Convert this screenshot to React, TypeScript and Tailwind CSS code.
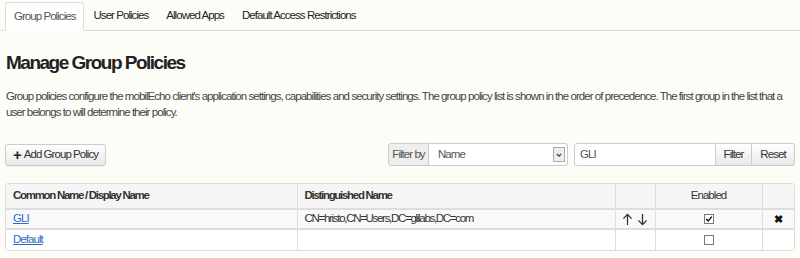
import React from "react";

const FONT = { fontFamily: "'Liberation Sans', Arial, sans-serif" };

const TABS = ["Group Policies", "User Policies", "Allowed Apps", "Default Access Restrictions"];

function CheckBox({ checked }: { checked: boolean }) {
  return (
    <span className="inline-flex h-[10px] w-[10px] items-center justify-center border border-[#777] bg-white align-middle">
      {checked && (
        <svg viewBox="0 0 10 10" className="h-[8px] w-[8px]">
          <path d="M1.5 5 L4 7.5 L8.5 2" fill="none" stroke="#111" strokeWidth="1.8" />
        </svg>
      )}
    </span>
  );
}

function Arrow({ down }: { down?: boolean }) {
  return (
    <svg viewBox="0 0 12 14" className="h-[13px] w-[11px]">
      <g transform={down ? "rotate(180 6 7)" : undefined} fill="none" stroke="#333" strokeWidth="1.4">
        <path d="M6 13 V1.5" />
        <path d="M1.5 6 L6 1.5 L10.5 6" />
      </g>
    </svg>
  );
}

export default function App() {
  return (
    <div className="h-[258px] w-[800px] overflow-hidden bg-[#fdfdf8] text-[11.5px] tracking-[-0.95px] text-[#333]" style={FONT}>
      <div className="flex border-b border-[#ddd] px-[5px] pt-[2px]">
        {TABS.map((t, i) => (
          <div
            key={t}
            className={
              i === 0
                ? "-mb-px flex h-[29px] items-center rounded-t-[3px] border border-[#ddd] border-b-transparent bg-white px-[8px] text-[#555]"
                : "flex h-[28px] items-center px-[9px] text-[#222]"
            }
          >
            {t}
          </div>
        ))}
      </div>

      <div className="px-[5px]">
        <h1 className="ml-px mt-[21px] text-[19px] font-bold leading-[22px] tracking-[-1.5px] text-[#222]">Manage Group Policies</h1>
        <p className="ml-px mt-[14px] leading-[16px] text-[#444]">
          Group policies configure the mobilEcho client's application settings, capabilities and security settings. The group policy list is shown in the order of precedence. The first group in the list that a user belongs to will determine their policy.
        </p>

        <div className="mt-[23px] flex items-center">
          <button className="flex h-[22px] items-center gap-[2px] rounded-[3px] border border-[#ccc] bg-gradient-to-b from-white to-[#e8e8e8] px-[7px] text-[#333] shadow-[0_1px_1px_rgba(0,0,0,0.05)]">
            <span className="text-[15px] font-bold leading-none tracking-normal text-[#222]">+</span>
            Add Group Policy
          </button>

          <div className="ml-auto flex h-[23px] items-stretch whitespace-nowrap">
            <div className="flex w-[41px] items-center justify-center rounded-l-[3px] border border-[#ccc] bg-[#eee] text-[#555]">Filter by</div>
            <div className="flex w-[139px] items-center justify-between rounded-r-[3px] border border-l-0 border-[#ccc] bg-white pl-[9px] pr-[2px] text-[#555]">
              <span>Name</span>
              <span className="flex h-[15px] w-[12px] items-center justify-center border border-[#aaa] bg-[#eee]">
                <svg viewBox="0 0 8 8" className="h-[6px] w-[6px]">
                  <path d="M1 2.5 L4 5.5 L7 2.5" fill="none" stroke="#333" strokeWidth="1.6" />
                </svg>
              </span>
            </div>
            <div className="ml-[6px] flex w-[142px] items-center rounded-l-[3px] border border-[#ccc] bg-white pl-[5px] text-[#555]">GLI</div>
            <div className="flex w-[36px] items-center justify-center border border-l-0 border-[#ccc] bg-gradient-to-b from-white to-[#e8e8e8] text-[#333]">Filter</div>
            <div className="flex w-[43px] items-center justify-center rounded-r-[3px] border border-l-0 border-[#ccc] bg-gradient-to-b from-white to-[#e8e8e8] text-[#333]">Reset</div>
          </div>
        </div>
      </div>

      <div className="mx-[5px] mt-[17px] overflow-hidden rounded-[3px] border border-[#ddd] bg-white">
        <table className="w-full table-fixed border-collapse">
          <colgroup>
            <col className="w-[291px]" />
            <col className="w-[318px]" />
            <col className="w-[40px]" />
            <col className="w-[107px]" />
            <col />
          </colgroup>
          <thead>
            <tr className="h-[25px] border-b-2 border-[#ddd] bg-[#f5f5f5] text-[#333]">
              <th className="border-r border-[#ddd] px-[7px] text-left font-bold tracking-[-1.3px]">Common Name / Display Name</th>
              <th className="border-r border-[#ddd] px-[7px] text-left font-bold tracking-[-1.3px]">Distinguished Name</th>
              <th className="border-r border-[#ddd]"></th>
              <th className="border-r border-[#ddd] text-center font-normal">Enabled</th>
              <th></th>
            </tr>
          </thead>
          <tbody>
            <tr className="h-[20px] border-b-2 border-[#ddd] bg-[#f9f9f9]">
              <td className="border-r border-[#ddd] px-[7px]">
                <a className="text-[#2a6ec9] underline">GLI</a>
              </td>
              <td className="border-r border-[#ddd] px-[7px] tracking-[-1.3px] text-[#333]">CN=hristo,CN=Users,DC=glilabs,DC=com</td>
              <td className="border-r border-[#ddd]">
                <div className="flex items-center justify-center gap-[4px]">
                  <Arrow />
                  <Arrow down />
                </div>
              </td>
              <td className="border-r border-[#ddd] text-center leading-none">
                <CheckBox checked />
              </td>
              <td className="text-center text-[11px] font-bold leading-none tracking-normal text-[#111]">✖</td>
            </tr>
            <tr className="h-[21px] bg-white">
              <td className="border-r border-[#ddd] px-[7px]">
                <a className="text-[#2a6ec9] underline">Default</a>
              </td>
              <td className="border-r border-[#ddd]"></td>
              <td className="border-r border-[#ddd]"></td>
              <td className="border-r border-[#ddd] text-center leading-none">
                <CheckBox checked={false} />
              </td>
              <td></td>
            </tr>
          </tbody>
        </table>
      </div>
    </div>
  );
}
